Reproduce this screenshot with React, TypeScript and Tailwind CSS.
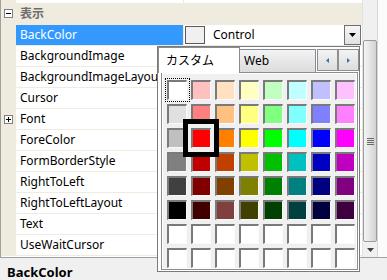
const rows = [
  { name: "BackColor", selected: true },
  { name: "BackgroundImage" },
  { name: "BackgroundImageLayout" },
  { name: "Cursor" },
  { name: "Font", expand: true },
  { name: "ForeColor" },
  { name: "FormBorderStyle" },
  { name: "RightToLeft" },
  { name: "RightToLeftLayout" },
  { name: "Text" },
  { name: "UseWaitCursor" },
];

const palette = [
  ["#FFFFFF", "#FFC0C0", "#FFE0C0", "#FFFFC0", "#C0FFC0", "#C0FFFF", "#C0C0FF", "#FFC0FF"],
  ["#E0E0E0", "#FF8080", "#FFC080", "#FFFF80", "#80FF80", "#80FFFF", "#8080FF", "#FF80FF"],
  ["#C0C0C0", "#FF0000", "#FF8000", "#FFFF00", "#00FF00", "#00FFFF", "#0000FF", "#FF00FF"],
  ["#808080", "#C00000", "#C04000", "#C0C000", "#00C000", "#00C0C0", "#0000C0", "#C000C0"],
  ["#404040", "#800000", "#804000", "#808000", "#008000", "#008080", "#000080", "#800080"],
  ["#000000", "#400000", "#804040", "#404000", "#004000", "#004040", "#000040", "#400040"],
  ["#FFFFFF", "#FFFFFF", "#FFFFFF", "#FFFFFF", "#FFFFFF", "#FFFFFF", "#FFFFFF", "#FFFFFF"],
  ["#FFFFFF", "#FFFFFF", "#FFFFFF", "#FFFFFF", "#FFFFFF", "#FFFFFF", "#FFFFFF", "#FFFFFF"],
];

function ToggleBox({ plus }: { plus?: boolean }) {
  return (
    <div className="relative w-[9px] h-[9px] border border-[#808080] bg-white">
      <div className="absolute left-[1px] top-[3px] w-[5px] h-px bg-black" />
      {plus && <div className="absolute left-[3px] top-[1px] w-px h-[5px] bg-black" />}
    </div>
  );
}

function DownTriangle() {
  return (
    <svg width="7" height="4" viewBox="0 0 7 4">
      <path d="M0 0h7L3.5 4z" fill="#000" />
    </svg>
  );
}

function PropertyRow({ name, selected, expand }: { name: string; selected?: boolean; expand?: boolean }) {
  return (
    <div className="flex h-[20px] mt-px">
      <div className="w-[15px] flex items-center justify-center">{expand && <ToggleBox plus />}</div>
      <div
        className={`w-[167px] pl-[4px] flex items-center overflow-hidden whitespace-nowrap ${
          selected ? "bg-[#3399FF] text-white" : "bg-white text-black"
        }`}
      >
        {name}
      </div>
      <div className="flex-1 ml-px bg-white flex items-center">
        {selected && (
          <>
            <div className="ml-px w-[20px] h-[18px] border border-[#5a5a5a] bg-[#F0F0F0]" />
            <span className="ml-[8px] flex-1 text-black">Control</span>
            <div className="mr-px w-[17px] h-[20px] border border-[#707070] bg-gradient-to-b from-[#f6f6f6] to-[#e2e2e2] flex items-center justify-center">
              <DownTriangle />
            </div>
          </>
        )}
      </div>
    </div>
  );
}

function ColorCell({ color, r, c }: { color: string; r: number; c: number }) {
  return (
    <div
      className="relative w-[20px] h-[20px] border-t-2 border-l-2 border-r border-b border-t-[#7a7a7a] border-l-[#7a7a7a] border-r-[#fafafa] border-b-[#fafafa]"
      style={{ backgroundColor: color }}
    >
      {r === 0 && c === 0 && (
        <div className="absolute -left-[4px] -top-[4px] w-[25px] h-[24px] border border-dotted border-black" />
      )}
      {r === 2 && c === 1 && (
        <div className="absolute -left-[10px] -top-[11px] w-[36px] h-[38px] border-[5px] border-black z-10" />
      )}
    </div>
  );
}

function ColorPopup() {
  return (
    <div className="absolute left-[157px] top-[46px] w-[203px] h-[226px] border border-[#7a7a7a] bg-white flex flex-col">
      {/* Tabs */}
      <div className="flex h-[25px] items-start">
        <div className="relative z-10 w-[82px] h-[26px] border-l border-t border-r border-[#898c95] bg-white pl-[7px] flex items-center text-black">
          カスタム
        </div>
        <div className="mt-[2px] w-[76px] h-[23px] border-t border-r border-[#898c95] bg-gradient-to-b from-[#f3f3f3] to-[#dcdcdc] pl-[4px] flex items-center text-black">
          Web
        </div>
        <div className="ml-px mt-[2px] w-[21px] h-[22px] border border-[#8f8f8f] bg-gradient-to-b from-[#f3f3f3] to-[#dddddd] flex items-center justify-center">
          <svg width="3" height="5" viewBox="0 0 3 5">
            <path d="M3 0v5L0 2.5z" fill="#4a6aa8" />
          </svg>
        </div>
        <div className="mt-[2px] w-[21px] h-[22px] border border-[#8f8f8f] bg-gradient-to-b from-[#f3f3f3] to-[#dddddd] flex items-center justify-center">
          <svg width="3" height="5" viewBox="0 0 3 5">
            <path d="M0 0v5L3 2.5z" fill="#4a6aa8" />
          </svg>
        </div>
      </div>
      {/* Tab page */}
      <div className="ml-[3px] w-[197px] h-[198px] border border-[#898c95] bg-white p-px">
        <div className="h-full bg-[#F0F0F0] pl-[4px] pt-[6px]">
          <div className="grid grid-cols-[repeat(8,20px)] gap-[4px]">
            {palette.map((row, r) => row.map((color, c) => <ColorCell key={`${r}-${c}`} color={color} r={r} c={c} />))}
          </div>
        </div>
      </div>
    </div>
  );
}

function ScrollBar() {
  return (
    <div className="w-[15px] h-full border-l border-[#e3e3e3] bg-[#f0f0f0] flex flex-col">
      <div className="h-[40px]" />
      <div className="h-[202px] rounded-[2px] border border-[#9a9a9a] bg-gradient-to-r from-[#f4f4f4] via-[#e4e4e4] to-[#d2d2d2] flex flex-col items-center justify-center gap-px">
        <div className="w-[7px] h-px bg-[#6a6a6a]" />
        <div className="w-[7px] h-px bg-[#6a6a6a]" />
        <div className="w-[7px] h-px bg-[#6a6a6a]" />
        <div className="w-[7px] h-px bg-[#6a6a6a]" />
      </div>
      <div className="flex-1 flex items-center justify-center">
        <svg width="7" height="4" viewBox="0 0 7 4">
          <path d="M0 0h7L3.5 4z" fill="#404040" />
        </svg>
      </div>
    </div>
  );
}

export default function App() {
  return (
    <div className="relative w-[387px] h-[280px] overflow-hidden bg-[#F0F0F0] flex flex-col font-['Noto_Sans','Noto_Sans_CJK_JP',sans-serif] text-[12px] leading-[16px]">
      <div className="flex h-[259px]">
        {/* Grid view */}
        <div className="w-[362px] border-l border-[#a0a0a0] bg-white flex flex-col">
          <div className="bg-[#EFEBDE] pb-px">
            <div className="flex h-[3px]">
              <div className="w-[15px]" />
              <div className="w-[167px] bg-white" />
              <div className="flex-1 ml-px bg-white" />
            </div>
            <div className="flex h-[21px] items-center">
              <div className="w-[15px] flex items-center justify-center">
                <ToggleBox />
              </div>
              <span className="pl-[4px] font-bold text-[#6e6e6e]">表示</span>
            </div>
            {rows.map((r) => (
              <PropertyRow key={r.name} name={r.name} selected={r.selected} expand={r.expand} />
            ))}
          </div>
          <div className="flex-1 bg-white" />
        </div>
        <ScrollBar />
        <div className="w-[10px] border-l border-[#d8d8d8] bg-[#fbfbfb]" />
      </div>
      <div className="h-px bg-[#a0a0a0]" />
      <div className="flex-1 pl-[7px] pt-[6px] text-[13px] font-bold text-black">BackColor</div>
      <ColorPopup />
    </div>
  );
}
